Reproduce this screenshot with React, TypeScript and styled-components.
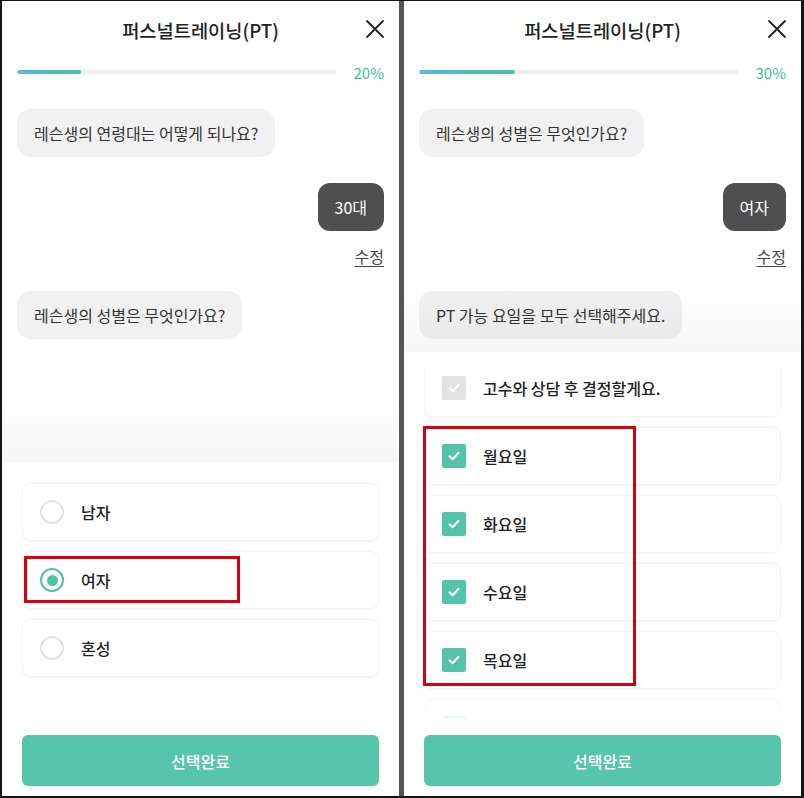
import React from "react";
import styled, { createGlobalStyle } from "styled-components";

const Global = createGlobalStyle`
  html, body { margin: 0; padding: 0; background: #111; }
  body { font-family: "Noto Sans CJK KR", "Noto Sans", sans-serif; }
  * { box-sizing: border-box; }
`;

const Frame = styled.div`
  display: flex;
  width: 804px;
  height: 798px;
  padding: 1px 3px 2px 2px;
  background: #151515;
`;

const Separator = styled.div`
  width: 5px;
  background: #555;
`;

const Panel = styled.div`
  position: relative;
  width: 397px;
  height: 795px;
  background: #fff;
  display: flex;
  flex-direction: column;
  overflow: hidden;
`;

const Header = styled.div`
  display: grid;
  grid-template-columns: 1fr auto 1fr;
  align-items: center;
  height: 56px;
  padding: 0 15px;
`;

const Title = styled.h1`
  grid-column: 2;
  margin: 0;
  font-size: 18.7px;
  font-weight: 500;
  color: #222;
`;

const CloseBtn = styled.button`
  grid-column: 3;
  justify-self: end;
  border: 0;
  background: none;
  padding: 0;
  width: 18px;
  height: 18px;
  display: flex;
  color: #222;
`;

const ProgressRow = styled.div`
  display: flex;
  align-items: center;
  gap: 17px;
  height: 30px;
  padding: 0 15px;
`;

const Track = styled.div`
  flex: 1;
  height: 4px;
  border-radius: 2px;
  background: #efefef;
  overflow: hidden;
`;

const Fill = styled.div`
  height: 100%;
  border-radius: 2px;
  background: linear-gradient(90deg, #5cb8e2, #43c29e);
`;

const Percent = styled.span`
  font-size: 15px;
  color: #3fbf9d;
  line-height: 1;
`;

const Chat = styled.div`
  flex: 1;
  display: flex;
  flex-direction: column;
  padding: 22px 15px 0;
`;

const Question = styled.div`
  align-self: flex-start;
  background: #f1f1f1;
  border-radius: 14px;
  padding: 13px 17px;
  font-size: 16px;
  line-height: 22px;
  color: #333;
`;

const Answer = styled.div`
  align-self: flex-end;
  margin-top: 26px;
  background: #4f4f4f;
  border-radius: 12px;
  padding: 13px 17px;
  font-size: 16px;
  line-height: 22px;
  color: #fff;
`;

const Edit = styled.a`
  align-self: flex-end;
  margin-top: 15px;
  margin-bottom: 25px;
  font-size: 16px;
  line-height: 20px;
  color: #444;
  text-decoration: underline;
  text-underline-offset: 3px;
`;

const Sheet = styled.div<{ $height: number; $top: number }>`
  position: relative;
  height: ${(p) => p.$height}px;
  flex: none;
  display: flex;
  flex-direction: column;
  padding: ${(p) => p.$top}px 20px 10px;
  background: #fff;
  &::before {
    content: "";
    position: absolute;
    left: 0;
    right: 0;
    top: -70px;
    height: 70px;
    background: linear-gradient(180deg, rgba(0, 0, 0, 0) 0%, rgba(0, 0, 0, 0.035) 100%);
    pointer-events: none;
  }
`;

const Viewport = styled.div<{ $fade?: boolean }>`
  position: relative;
  flex: 1;
  overflow: hidden;
  &::after {
    content: "";
    display: ${(p) => (p.$fade ? "block" : "none")};
    position: absolute;
    left: 0;
    right: 0;
    bottom: 0;
    height: 32px;
    background: linear-gradient(180deg, rgba(255, 255, 255, 0), #fff 85%);
  }
`;

const List = styled.div<{ $offset?: number }>`
  display: flex;
  flex-direction: column;
  gap: 10px;
  margin-top: ${(p) => p.$offset || 0}px;
`;

const Card = styled.div`
  display: flex;
  align-items: center;
  gap: 17px;
  height: 58px;
  padding: 0 17px;
  border: 1px solid #f3f3f3;
  border-radius: 8px;
  background: #fff;
  box-shadow: 0 1px 4px rgba(0, 0, 0, 0.035);
  font-size: 16px;
  font-weight: 500;
  color: #222;
`;

const Radio = styled.span<{ $on?: boolean }>`
  width: 24px;
  height: 24px;
  border-radius: 50%;
  border: 2.5px solid ${(p) => (p.$on ? "#52c2a7" : "#e2e2e2")};
  display: flex;
  align-items: center;
  justify-content: center;
  flex: none;
  &::after {
    content: "";
    display: ${(p) => (p.$on ? "block" : "none")};
    width: 11px;
    height: 11px;
    border-radius: 50%;
    background: #52c2a7;
  }
`;

const Check = styled.span<{ $disabled?: boolean }>`
  width: 24px;
  height: 24px;
  border-radius: 2px;
  background: ${(p) => (p.$disabled ? "#e3e3e3" : "#55c3aa")};
  display: flex;
  align-items: center;
  justify-content: center;
  flex: none;
`;

const Footer = styled.div`
  margin-top: auto;
  padding-top: 10px;
`;

const Submit = styled.button`
  width: 100%;
  height: 51px;
  border: 0;
  border-radius: 6px;
  background: #57c4ac;
  color: #fff;
  font-family: inherit;
  font-size: 16px;
  font-weight: 500;
`;

const Highlight = styled.div<{ $l: number; $t: number; $w: number; $h: number }>`
  position: absolute;
  left: ${(p) => p.$l}px;
  top: ${(p) => p.$t}px;
  width: ${(p) => p.$w}px;
  height: ${(p) => p.$h}px;
  border: 3px solid #d8000e;
  pointer-events: none;
`;

const XIcon = () => (
  <svg width="18" height="18" viewBox="0 0 18 18" fill="none">
    <path d="M1 1L17 17M17 1L1 17" stroke="#222" strokeWidth="1.8" strokeLinecap="round" />
  </svg>
);

const Tick = () => (
  <svg width="14" height="14" viewBox="0 0 14 14" fill="none">
    <path d="M2.5 7.2L5.6 10.2L11.5 3.8" stroke="#fff" strokeWidth="2" strokeLinecap="round" strokeLinejoin="round" />
  </svg>
);

const Top: React.FC<{ pct: number }> = ({ pct }) => (
  <>
    <Header>
      <Title>퍼스널트레이닝(PT)</Title>
      <CloseBtn aria-label="닫기">
        <XIcon />
      </CloseBtn>
    </Header>
    <ProgressRow>
      <Track>
        <Fill style={{ width: `${pct}%` }} />
      </Track>
      <Percent>{pct}%</Percent>
    </ProgressRow>
  </>
);

const genders = [
  { label: "남자", on: false },
  { label: "여자", on: true },
  { label: "혼성", on: false },
];

const days = [
  { label: "고수와 상담 후 결정할게요.", disabled: true },
  { label: "월요일" },
  { label: "화요일" },
  { label: "수요일" },
  { label: "목요일" },
  { label: "금요일" },
];

export default function App() {
  return (
    <>
      <Global />
      <Frame>
        <Panel>
          <Top pct={20} />
          <Chat>
            <Question>레슨생의 연령대는 어떻게 되나요?</Question>
            <Answer>30대</Answer>
            <Edit>수정</Edit>
            <Question>레슨생의 성별은 무엇인가요?</Question>
          </Chat>
          <Sheet $height={334} $top={21}>
            <List>
              {genders.map((g) => (
                <Card key={g.label}>
                  <Radio $on={g.on} />
                  {g.label}
                </Card>
              ))}
            </List>
            <Footer>
              <Submit>선택완료</Submit>
            </Footer>
          </Sheet>
          <Highlight $l={22} $t={555} $w={216} $h={47} />
        </Panel>
        <Separator />
        <Panel>
          <Top pct={30} />
          <Chat>
            <Question>레슨생의 성별은 무엇인가요?</Question>
            <Answer>여자</Answer>
            <Edit>수정</Edit>
            <Question>PT 가능 요일을 모두 선택해주세요.</Question>
          </Chat>
          <Sheet $height={444} $top={14}>
            <Viewport $fade>
              <List $offset={-7}>
                {days.map((d) => (
                  <Card key={d.label}>
                    <Check $disabled={d.disabled}>
                      <Tick />
                    </Check>
                    {d.label}
                  </Card>
                ))}
              </List>
            </Viewport>
            <Footer>
              <Submit>선택완료</Submit>
            </Footer>
          </Sheet>
          <Highlight $l={19} $t={425} $w={213} $h={260} />
        </Panel>
      </Frame>
    </>
  );
}
